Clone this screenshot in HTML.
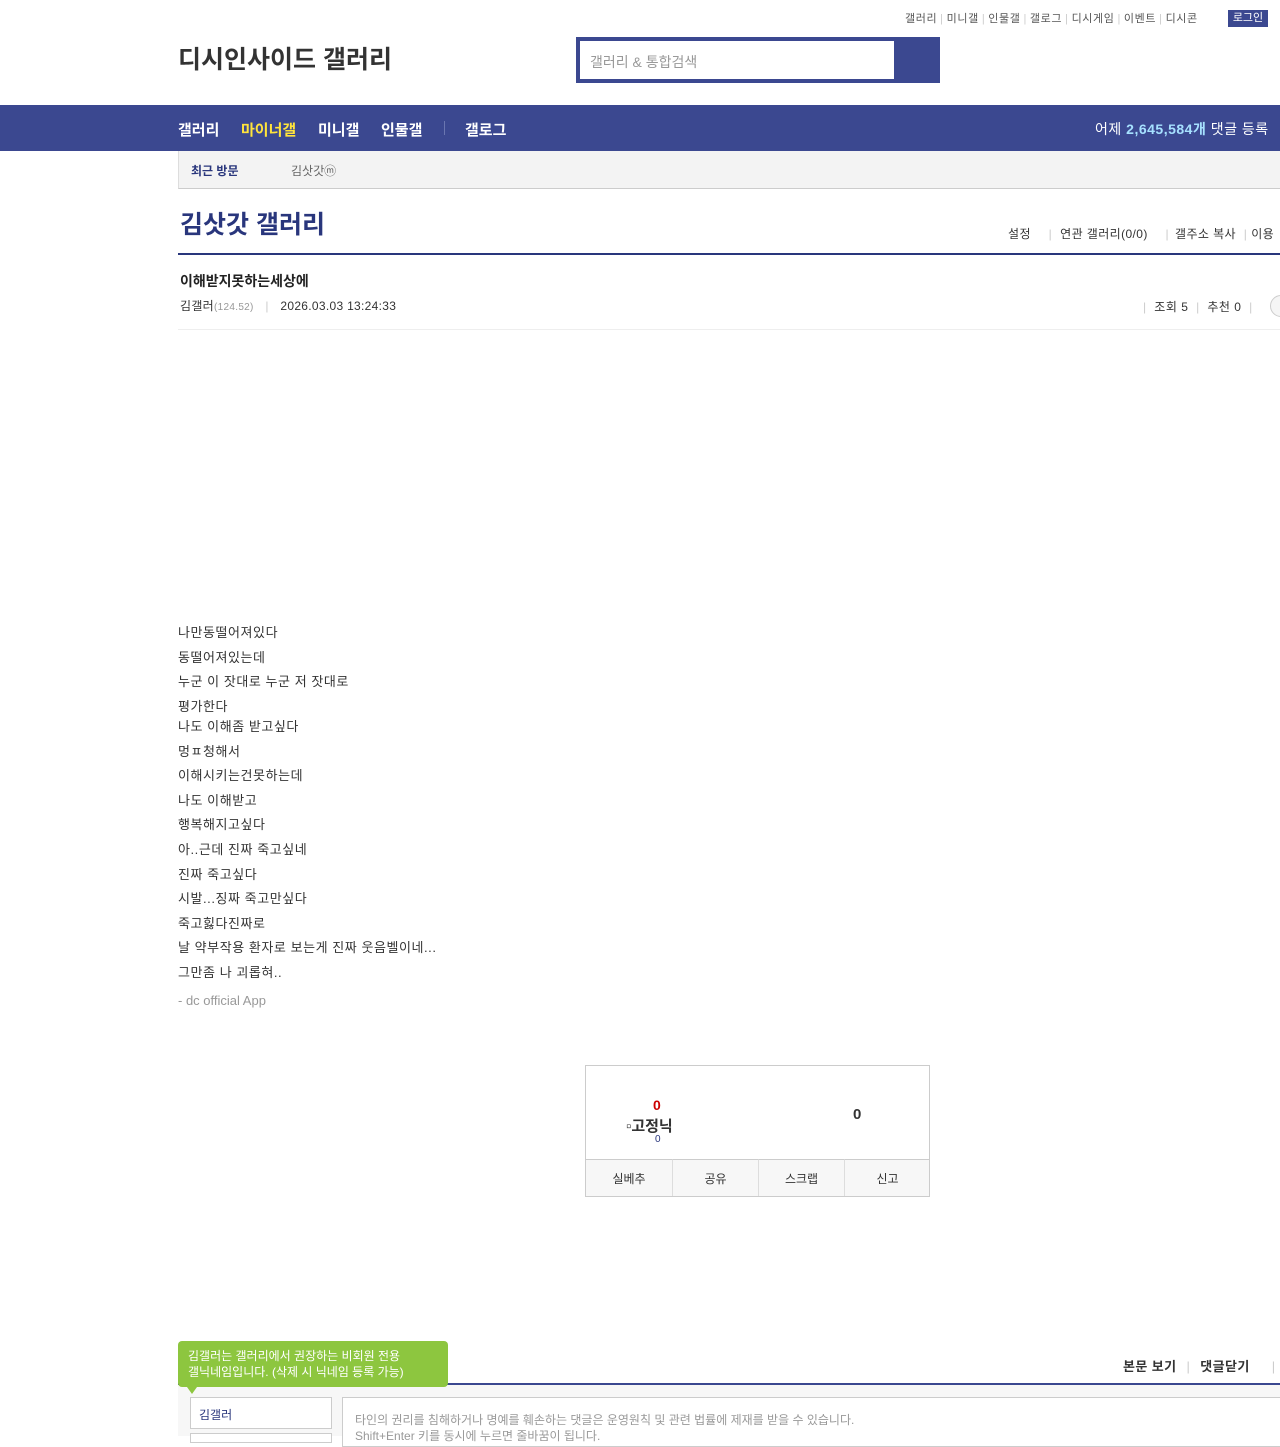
<!DOCTYPE html>
<html><head><meta charset="utf-8"><style>
*{margin:0;padding:0;box-sizing:border-box}
body{width:1280px;height:1436px;overflow:hidden;background:#fff;font-family:"Liberation Sans","Noto Sans CJK KR",sans-serif;color:#333;position:relative}
.a{position:absolute;white-space:nowrap}
.top{font-size:11px;color:#555;top:10px;left:905px;letter-spacing:0.6px}
.top span{color:#ccc;margin:0 3px}
.login{left:1228px;top:10px;width:40px;height:17px;background:#3b4890;color:#fff;font-size:11px;text-align:center;line-height:17px}
.logo{left:178px;top:40px;font-size:25px;font-weight:bold;color:#333}
.search{left:576px;top:37px;width:364px;height:46px;background:#3b4890}
.search div{position:absolute;left:4px;top:4px;width:314px;height:38px;background:#fff;font-size:14px;color:#999;padding:11px 0 0 10px}
.nav{left:0;top:105px;width:1280px;height:46px;background:#3b4890}
.nav span{position:absolute;top:14px;font-size:15px;font-weight:bold;color:#fff}
.sub{left:178px;top:151px;width:1102px;height:38px;background:#f3f3f3;border-left:1px solid #ddd;border-bottom:1px solid #ccc}
h1{position:absolute;left:180px;top:205px;font-size:25px;color:#29367c;font-weight:bold}
.bar{left:178px;top:253px;width:1102px;height:2px;background:#29367c}
.body{left:178px;font-size:13px;color:#333;letter-spacing:0.55px}
.rec{left:585px;top:1065px;width:345px;height:132px;border:1px solid #ccc;overflow:hidden}
.rec .bt{position:absolute;top:93px;height:38px;width:86px;background:#f7f7f7;border-top:1px solid #ccc;font-size:12px;text-align:center;line-height:38px}
</style></head><body>
<div class="a top">갤러리<span>|</span>미니갤<span>|</span>인물갤<span>|</span>갤로그<span>|</span>디시게임<span>|</span>이벤트<span>|</span>디시콘</div>
<div class="a login">로그인</div>
<div class="a logo">디시인사이드 갤러리</div>
<div class="a search"><div>갤러리 &amp; 통합검색</div></div>
<div class="a nav">
<span style="left:178px">갤러리</span><span style="left:241px;color:#ffe43c">마이너갤</span><span style="left:318px">미니갤</span><span style="left:381px">인물갤</span><span style="left:444px;top:16px;width:1px;height:14px;background:#6a76b0"></span><span style="left:465px">갤로그</span>
<span style="left:1095px;font-weight:normal;font-size:14px;letter-spacing:0.5px">어제 <b style="color:#a6e1ff">2,645,584개</b> 댓글 등록</span>
</div>
<div class="a sub"><span class="a" style="left:12px;top:11px;font-size:12px;font-weight:bold;color:#29367c">최근 방문</span><span class="a" style="left:112px;top:11px;font-size:12px;color:#666">김삿갓ⓜ</span></div>
<h1>김삿갓 갤러리</h1>
<div class="a" style="left:1008px;top:225px;font-size:12px;color:#333;letter-spacing:0.4px">설정 <span style="color:#ccc;margin:0 8px 0 14px">|</span>연관 갤러리(0/0) <span style="color:#ccc;margin:0 6px 0 14px">|</span>갤주소 복사 <span style="color:#ccc;margin:0 4px">|</span>이용</div>
<div class="a bar"></div>
<div class="a" style="left:180px;top:271px;font-size:14px;font-weight:bold;color:#222">이해받지못하는세상에</div>
<div class="a" style="left:180px;top:297px;font-size:12px;color:#333;letter-spacing:0.3px">김갤러<span style="font-size:10px;color:#999">(124.52)</span> <span style="color:#ccc;margin:0 8px">|</span> 2026.03.03 13:24:33</div>
<div class="a" style="left:1143px;top:298px;font-size:12px;color:#333;letter-spacing:0.5px"><span style="color:#ccc">|</span>&nbsp; 조회 5 &nbsp;<span style="color:#ccc">|</span>&nbsp; 추천 0 &nbsp;<span style="color:#ccc">|</span></div>
<div class="a" style="left:1270px;top:295px;width:22px;height:22px;border:1px solid #ccc;border-radius:50%;background:#f5f5f5"></div>
<div class="a" style="left:178px;top:329px;width:1102px;height:1px;background:#eee"></div>
<div class="a body" style="top:621px;line-height:24.6px">나만동떨어져있다<br>동떨어져있는데<br>누군 이 잣대로 누군 저 잣대로<br>평가한다</div>
<div class="a body" style="top:715px;line-height:24.6px">나도 이해좀 받고싶다<br>멍ㅍ청해서<br>이해시키는건못하는데<br>나도 이해받고<br>행복해지고싶다<br>아..근데 진짜 죽고싶네<br>진짜 죽고싶다<br>시발...징짜 죽고만싶다<br>죽고힗다진짜로<br>날 약부작용 환자로 보는게 진짜 웃음벨이네...<br>그만좀 나 괴롭혀..</div>
<div class="a" style="left:178px;top:993px;font-size:13px;color:#999">- dc official App</div>
<div class="a rec">
<div class="a" style="left:67px;top:31px;font-size:14px;font-weight:bold;color:#c00">0</div>
<div class="a" style="left:40px;top:49px;font-size:15px;font-weight:bold;color:#333">▫고정닉</div>
<div class="a" style="left:69px;top:68px;font-size:10px;color:#29367c">0</div>
<div class="a" style="left:267px;top:40px;font-size:15px;font-weight:bold;color:#333">0</div>
<div class="bt" style="left:0">실베추</div><div class="bt" style="left:86px;border-left:1px solid #ddd">공유</div><div class="bt" style="left:172px;border-left:1px solid #ddd">스크랩</div><div class="bt" style="left:258px;border-left:1px solid #ddd">신고</div>
</div>
<div class="a" style="left:1123px;top:1356px;font-size:13px;font-weight:bold;color:#333;letter-spacing:0.4px">본문 보기 <span style="color:#ccc;font-weight:normal;margin:0 6px">|</span> 댓글닫기 <span style="color:#ccc;font-weight:normal;margin-left:18px">|</span></div>
<div class="a" style="left:178px;top:1383px;width:1102px;height:2px;background:#3b4890"></div>
<div class="a" style="left:178px;top:1385px;width:1102px;height:51px;background:#f7f7f7"></div>
<div class="a" style="left:190px;top:1397px;width:142px;height:32px;border:1px solid #ccc;background:#fff;font-size:12px;color:#29367c;padding:8px 0 0 8px">김갤러</div>
<div class="a" style="left:190px;top:1433px;width:142px;height:10px;border:1px solid #ccc;background:#fff"></div>
<div class="a" style="left:342px;top:1397px;width:950px;height:50px;border:1px solid #ccc;background:#fff;font-size:12px;color:#999;padding:14px 0 0 12px;line-height:16px">타인의 권리를 침해하거나 명예를 훼손하는 댓글은 운영원칙 및 관련 법률에 제재를 받을 수 있습니다.<br>Shift+Enter 키를 동시에 누르면 줄바꿈이 됩니다.</div>
<div class="a" style="left:178px;top:1341px;width:270px;height:46px;background:#8dc63f;border-radius:4px;color:#fff;font-size:12px;line-height:16px;padding:7px 0 0 10px">김갤러는 갤러리에서 권장하는 비회원 전용<br>갤닉네임입니다. (삭제 시 닉네임 등록 가능)</div>
<div class="a" style="left:187px;top:1387px;width:0;height:0;border-left:5px solid transparent;border-right:5px solid transparent;border-top:7px solid #8dc63f"></div>
</body></html>
